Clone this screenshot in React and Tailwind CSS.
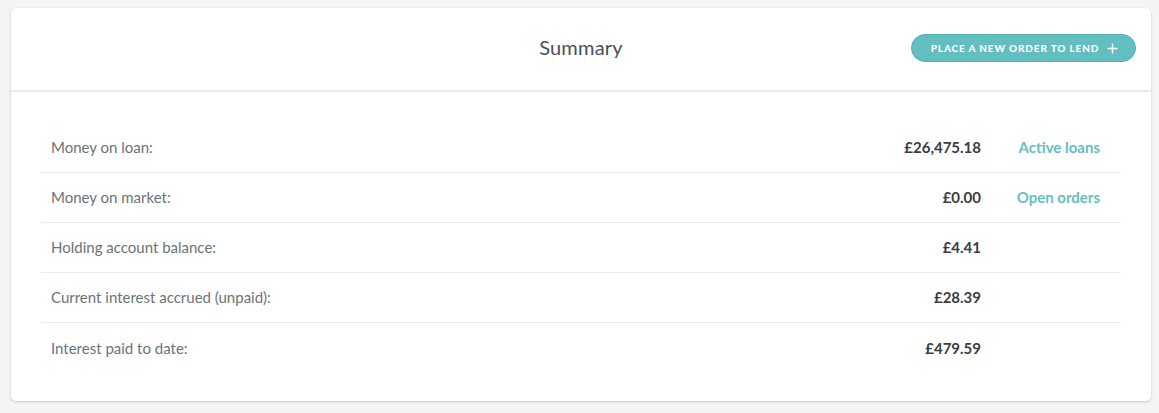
export default function App() {
  const rows = [
    { label: "Money on loan:", value: "£26,475.18", link: "Active loans" },
    { label: "Money on market:", value: "£0.00", link: "Open orders" },
    { label: "Holding account balance:", value: "£4.41" },
    { label: "Current interest accrued (unpaid):", value: "£28.39" },
    { label: "Interest paid to date:", value: "£479.59" },
  ];
  return (
    <div className="w-[1159px] h-[413px] bg-[#f4f4f4] pt-[8px] pl-[11px]" style={{ fontFamily: "Lato, 'Open Sans', sans-serif" }}>
      <div className="w-[1140px] h-[393px] bg-white rounded-[5px] shadow-[0_1px_3px_rgba(0,0,0,0.18)]">
        <div className="relative h-[84px] border-b-2 border-[#e9e9e9] flex items-center justify-center">
          <h1 className="text-[20px] text-[#4a4f57] tracking-[0.2px] -mt-[4px]">Summary</h1>
          <button className="absolute left-[900px] top-[26px] h-[28px] w-[225px] rounded-full bg-[#62bec0] border border-[#55aeb0] text-white flex items-center justify-center gap-[8px]">
            <span className="text-[10px] font-black tracking-[0.85px] pl-[2px]">PLACE A NEW ORDER TO LEND</span>
            <svg width="11" height="11" viewBox="0 0 11 11"><path d="M5.5 0.5v10M0.5 5.5h10" stroke="white" strokeWidth="1.4" /></svg>
          </button>
        </div>
        <div className="pt-[31px] px-[30px]">
          {rows.map((r, i) => (
            <div key={i} className={`flex items-center h-[50px] ${i < rows.length - 1 ? "border-b border-[#ebebeb]" : ""}`}>
              <div className="flex-1 pl-[10px] text-[15px] text-[#6c737a]">{r.label}</div>
              <div className="text-[15px] font-bold text-[#3a3d42] text-right">{r.value}</div>
              <div className="w-[140px] pr-[21px] text-right text-[15px] font-bold text-[#66bfbf]">{r.link || ""}</div>
            </div>
          ))}
        </div>
      </div>
    </div>
  );
}
